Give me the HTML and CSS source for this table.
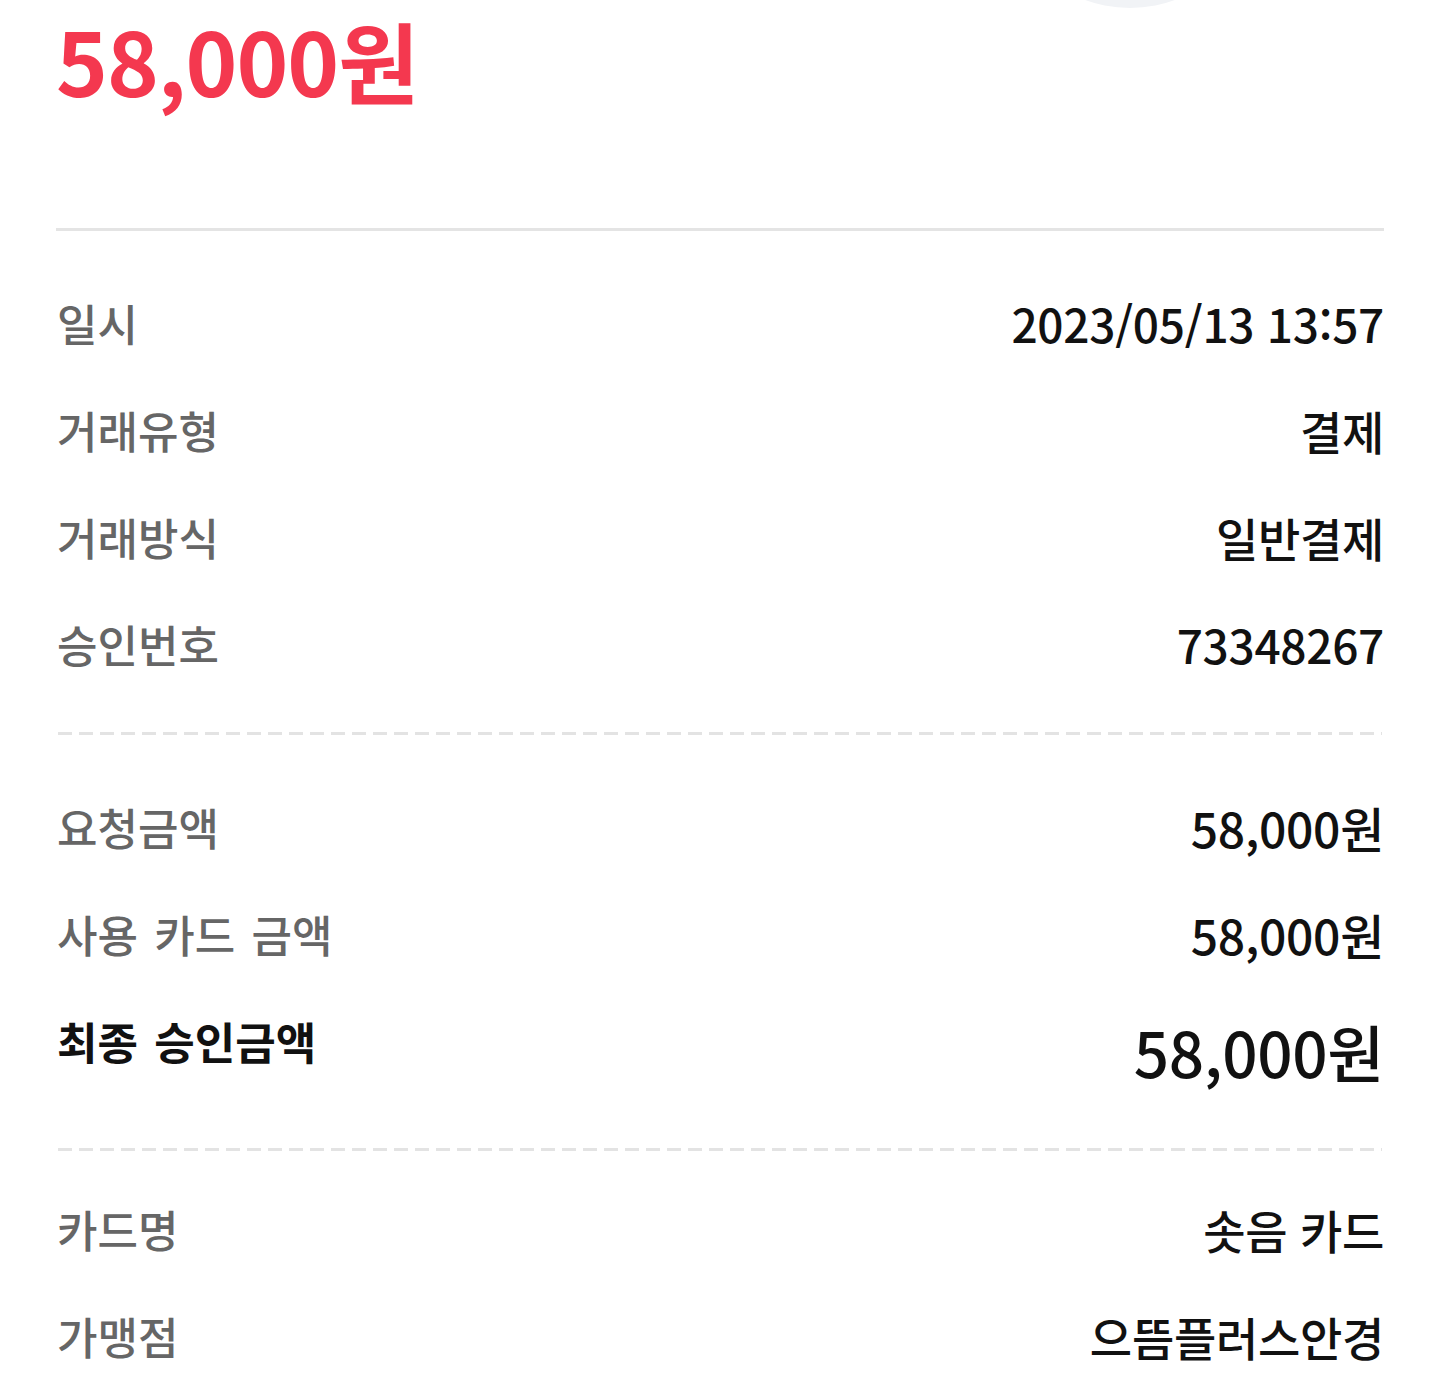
FILE: index.html
```html
<!DOCTYPE html>
<html lang="ko">
<head>
<meta charset="utf-8">
<link rel="stylesheet" href="styles.css">
</head>
<body>
<div class="page">
  <div class="circle"></div>
  <div class="amount">58,000원</div>
  <div class="divider"></div>
  <section class="group g1">
    <div class="row"><span class="label">일시</span><span class="value">2023/05/13 13:57</span></div>
    <div class="row"><span class="label">거래유형</span><span class="value">결제</span></div>
    <div class="row"><span class="label">거래방식</span><span class="value">일반결제</span></div>
    <div class="row"><span class="label">승인번호</span><span class="value">73348267</span></div>
  </section>
  <div class="dash"></div>
  <section class="group g2">
    <div class="row num"><span class="label">요청금액</span><span class="value">58,000원</span></div>
    <div class="row num"><span class="label">사용 카드 금액</span><span class="value">58,000원</span></div>
    <div class="row total"><span class="label">최종 승인금액</span><span class="value">58,000원</span></div>
  </section>
  <div class="dash"></div>
  <section class="group g3">
    <div class="row"><span class="label">카드명</span><span class="value">솟음 카드</span></div>
    <div class="row"><span class="label">가맹점</span><span class="value">으뜸플러스안경</span></div>
  </section>
</div>
</body>
</html>
```

FILE: styles.css
```css
* { box-sizing: border-box; margin: 0; padding: 0; }
html, body { background: #fff; }
body {
  font-family: "Noto Sans CJK KR", "Noto Sans", sans-serif;
  overflow: hidden;
}
.page {
  position: relative;
  width: 1440px;
  height: 1400px;
  padding: 0 56px;
}
.circle {
  position: absolute;
  left: 1000px;
  top: -252px;
  width: 260px;
  height: 260px;
  border-radius: 50%;
  background: #f1f3f6;
}
.amount {
  color: #f4384f;
  font-size: 88px;
  font-weight: 700;
  line-height: 1.2;
  letter-spacing: -1px;
  padding-top: 6px;
  height: 228px;
}
.divider {
  height: 3px;
  background: #e4e4e4;
}
.group { display: flex; flex-direction: column; }
.g1 { padding-top: 38px; padding-bottom: 35px; }
.g2 { padding-top: 38px; padding-bottom: 41px; }
.g3 { padding-top: 24px; }
.row {
  height: 107px;
  display: flex;
  justify-content: space-between;
  align-items: center;
}
.label {
  color: #666;
  font-size: 44px;
  font-weight: 500;
  word-spacing: 4px;
  padding-left: 1px;
}
.value {
  color: #111;
  font-size: 46px;
  font-weight: 500;
  letter-spacing: -0.3px;
}
.row.num .value { font-size: 48px; }
.total { height: 120px; padding-top: 8px; }
.total .label { color: #111; font-weight: 700; margin-bottom: 20px; }
.total .value { font-size: 62px; }
.dash {
  height: 3px;
  margin: 0 2px;
  background: repeating-linear-gradient(to right, #e3e3e3 0 14px, transparent 14px 21px);
}
```
